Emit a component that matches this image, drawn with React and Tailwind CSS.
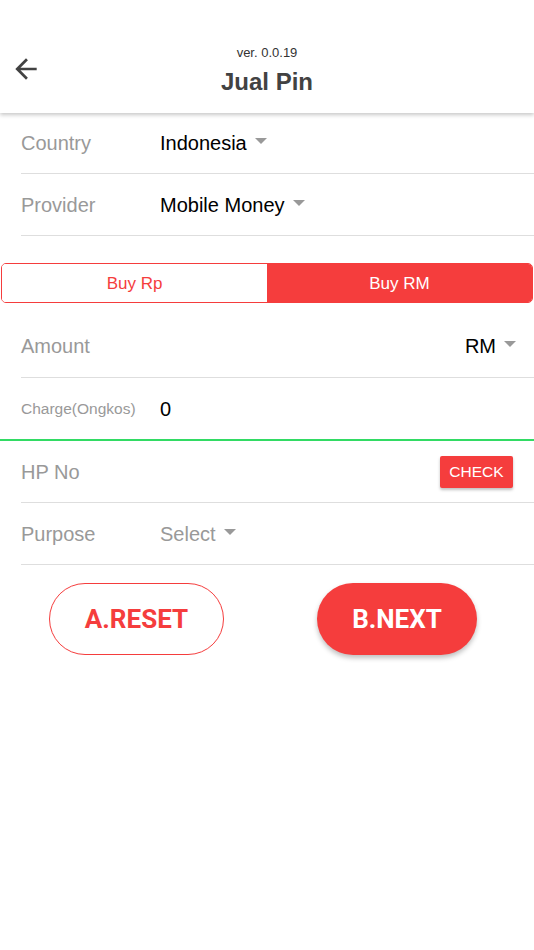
import React from "react";

const Caret = () => (
  <span className="inline-block w-0 h-0 border-l-[6px] border-r-[6px] border-t-[6px] border-l-transparent border-r-transparent border-t-[#999999] ml-[8px] -translate-y-[2px]" />
);

export default function App() {
  return (
    <div className="w-[534px] h-[950px] bg-white overflow-hidden" style={{ fontFamily: '"Liberation Sans", Arial, sans-serif' }}>
      {/* Header */}
      <div className="relative z-10 h-[113px] bg-white shadow-[0_2px_4px_rgba(0,0,0,0.22)] grid grid-cols-[64px_1fr_64px]">
        <div className="pt-[53px] pl-[10px]">
          <svg width="32" height="32" viewBox="0 0 512 512" fill="#424242">
            <path d="M427 234.625H167.296l119.702-119.702L256 85 85 256l171 171 29.922-29.924-118.626-119.701H427v-42.75z" />
          </svg>
        </div>
        <div className="pt-[45px] flex flex-col items-center">
          <div className="text-[13px] leading-[16px] text-[#333333]">ver. 0.0.19</div>
          <div className="mt-[7px] text-[24px] leading-[28px] font-bold text-[#424242]">Jual Pin</div>
        </div>
        <div />
      </div>

      {/* Country */}
      <div className="ml-[21px] h-[61px] flex items-center border-b border-[#dedede]">
        <div className="w-[139px] text-[20px] text-[#999999]">Country</div>
        <div className="flex items-center text-[20px] text-black">Indonesia<Caret /></div>
      </div>
      <div className="ml-[21px] h-[62px] flex items-center border-b border-[#dedede]">
        <div className="w-[139px] text-[20px] text-[#999999]">Provider</div>
        <div className="flex items-center text-[20px] text-black">Mobile Money<Caret /></div>
      </div>

      {/* Toggle */}
      <div className="mt-[27px] mx-[1px] h-[40px] flex border border-[#f53d3d] rounded-[5px] overflow-hidden text-[17px]">
        <div className="flex-1 flex items-center justify-center text-[#f53d3d] bg-white pt-[1px]">Buy Rp</div>
        <div className="flex-1 flex items-center justify-center text-white bg-[#f53d3d] pt-[1px]">Buy RM</div>
      </div>

      {/* Amount */}
      <div className="mt-[12px] ml-[21px] h-[63px] flex items-center border-b border-[#dedede] pr-[18px]">
        <div className="flex-1 text-[20px] text-[#999999]">Amount</div>
        <div className="flex items-center text-[20px] text-black">RM<Caret /></div>
      </div>

      {/* Charge */}
      <div className="h-[63px] pl-[21px] flex items-center border-b-2 border-[#32db64]">
        <div className="w-[139px] text-[15.5px] text-[#999999]">Charge(Ongkos)</div>
        <div className="text-[20px] text-black">0</div>
      </div>

      {/* HP No */}
      <div className="ml-[21px] h-[62px] flex items-center border-b border-[#dedede] pr-[21px]">
        <div className="flex-1 text-[20px] text-[#999999]">HP No</div>
        <div className="w-[73px] h-[32px] rounded-[2px] bg-[#f53d3d] text-white text-[15.5px] flex items-center justify-center shadow-[0_2px_3px_rgba(0,0,0,0.25)]">CHECK</div>
      </div>

      {/* Purpose */}
      <div className="ml-[21px] h-[62px] flex items-center border-b border-[#dedede]">
        <div className="w-[139px] text-[20px] text-[#999999]">Purpose</div>
        <div className="flex items-center text-[20px] text-[#999999]">Select<Caret /></div>
      </div>

      {/* Buttons */}
      <div className="mt-[18px] pl-[49px] flex gap-[93px]" style={{ fontFamily: 'Roboto, "Liberation Sans", sans-serif' }}>
        <div className="w-[175px] h-[72px] rounded-full border border-[#f53d3d] text-[#f53d3d] text-[26px] font-bold flex items-center justify-center">A.RESET</div>
        <div className="w-[160px] h-[72px] rounded-full bg-[#f53d3d] text-white text-[26px] font-bold flex items-center justify-center shadow-[0_3px_5px_rgba(0,0,0,0.25)]">B.NEXT</div>
      </div>
    </div>
  );
}
